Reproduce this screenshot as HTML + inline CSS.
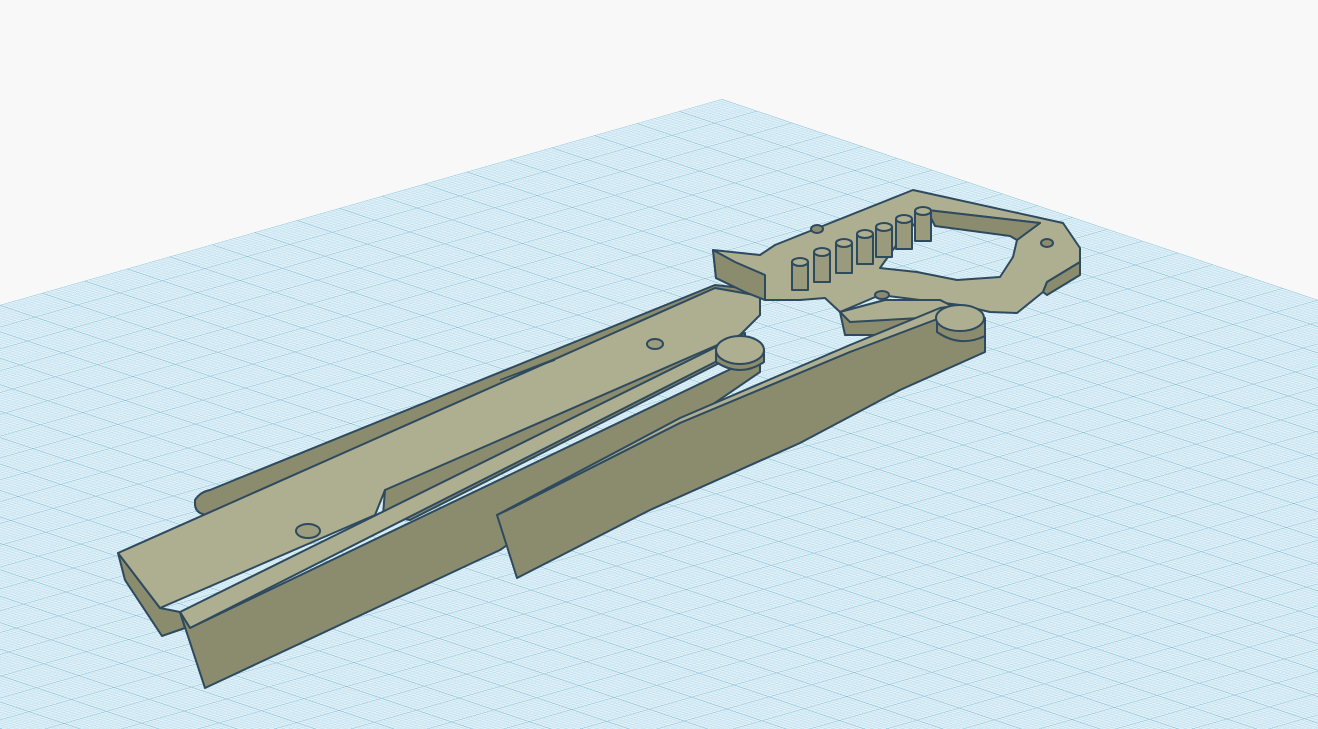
<!DOCTYPE html>
<html><head><meta charset="utf-8"><style>html,body{margin:0;padding:0;background:#f8f8f8;width:1318px;height:729px;overflow:hidden}</style></head>
<body>
<svg width="1318" height="729" viewBox="0 0 1318 729" xmlns="http://www.w3.org/2000/svg">
<defs>
<pattern id="g" width="10" height="10" patternUnits="userSpaceOnUse" patternTransform="matrix(-4.247 1.212 3.506 1.182 722 99)">
<rect width="10" height="10" fill="#e2f1f8"/>
<path d="M1 0V10M2 0V10M3 0V10M4 0V10M5 0V10M6 0V10M7 0V10M8 0V10M9 0V10M0 1H10M0 2H10M0 3H10M0 4H10M0 5H10M0 6H10M0 7H10M0 8H10M0 9H10" stroke="#a8d5e8" stroke-width="0.12"/>
<path d="M0 0V10M0 0H10" stroke="#6aaecb" stroke-width="0.35"/>
</pattern>
</defs>
<polygon points="722,99 1318,300 1318,729 0,729 0,305" fill="url(#g)"/>
<g stroke="#2d4a5e" stroke-width="2" stroke-linejoin="round">
<path d="M195,500 Q200,492 210,490 L715,285 L760,290 L760,300 L210,515 Q196,515 195,505Z" fill="#8b8b6e"/>
<path d="M118,553 L125,580 L162,636 L185,628 L180,612 L160,608Z" fill="#8b8b6e"/>
<path d="M118,553 L715,288 L760,296 L760,315 L740,335 L420,480 L395,495 L385,490 L375,515 L160,608Z" fill="#aeae90"/>
<path d="M385,490 L383,515 L410,520 L745,350 L745,333 Z" fill="#8b8b6e"/>
<ellipse cx="308" cy="531" rx="12" ry="7" fill="#9c9c7f"/>
<ellipse cx="655" cy="344" rx="8" ry="5" fill="#9c9c7f"/>
<path d="M500,380 L560,357 M505,378 L555,360" fill="none" stroke-width="1.5"/>
<path d="M713,250 L760,255 L775,245 L913,190 L1063,223 L1080,248 L1080,262 L1047,282 L1043,292 L1017,313 L990,312 L960,305 L880,295 L840,312 L825,298 L800,300 L765,300 L745,292 L716,278Z" fill="#aeae90"/>
<path d="M713,250 L716,278 L745,292 L765,300 L765,275 L735,262Z" fill="#8b8b6e"/>
<path d="M1080,250 L1080,262 L1047,282 L1043,292 L1047,295 L1080,275Z" fill="#8b8b6e"/>
<path d="M927,210 L1040,223 L1017,240 L1013,257 L1000,277 L957,280 L917,272 L880,268 L900,240 Z" fill="url(#g)"/>
<path d="M927,210 L1040,223 L1017,240 L1010,236 L935,226Z" fill="#8b8b6e"/>
<ellipse cx="1047" cy="243" rx="6" ry="4" fill="#8b8b6e"/>
<ellipse cx="882" cy="295" rx="7" ry="4" fill="#8b8b6e"/>
<ellipse cx="817" cy="229" rx="6" ry="4" fill="#8b8b6e"/>
<g fill="#9a9a7c">
<path d="M792,262 v28 h16 v-28Z"/><ellipse cx="800" cy="262" rx="8" ry="4" fill="#aeae90"/>
<path d="M814,252 v30 h16 v-30Z"/><ellipse cx="822" cy="252" rx="8" ry="4" fill="#aeae90"/>
<path d="M836,243 v30 h16 v-30Z"/><ellipse cx="844" cy="243" rx="8" ry="4" fill="#aeae90"/>
<path d="M857,234 v30 h16 v-30Z"/><ellipse cx="865" cy="234" rx="8" ry="4" fill="#aeae90"/>
<path d="M876,227 v30 h16 v-30Z"/><ellipse cx="884" cy="227" rx="8" ry="4" fill="#aeae90"/>
<path d="M896,219 v30 h16 v-30Z"/><ellipse cx="904" cy="219" rx="8" ry="4" fill="#aeae90"/>
<path d="M915,211 v30 h16 v-30Z"/><ellipse cx="923" cy="211" rx="8" ry="4" fill="#aeae90"/>
</g>
<path d="M840,312 L885,300 L940,300 L960,310 L960,330 L920,335 L845,335Z" fill="#8b8b6e"/>
<path d="M840,312 L885,300 L940,300 L960,310 L920,318 L850,322Z" fill="#aeae90"/>
<path d="M180,612 L720,345 L735,352 L190,628Z" fill="#aeae90"/>
<path d="M180,612 L205,688 L500,550 L760,372 L760,355 L190,628Z" fill="#8b8b6e"/>
<path d="M716,350 L716,362 Q740,378 764,362 L764,350Z" fill="#8b8b6e"/>
<ellipse cx="740" cy="350" rx="24" ry="14" fill="#aeae90"/>
<path d="M497,515 L680,418 L850,345 L940,308 L960,305 L945,320 L850,352 L680,423 L514,507Z" fill="#aeae90"/>
<path d="M497,515 L517,578 L650,510 L800,443 L900,390 L985,352 L985,335 L940,318 L850,352 L680,423 L514,507Z" fill="#8b8b6e"/>
<path d="M937,318 L937,332 Q960,348 985,336 L985,318Z" fill="#8b8b6e"/>
<ellipse cx="960" cy="318" rx="24" ry="13" fill="#aeae90"/>
</g>
</svg>
</body></html>
